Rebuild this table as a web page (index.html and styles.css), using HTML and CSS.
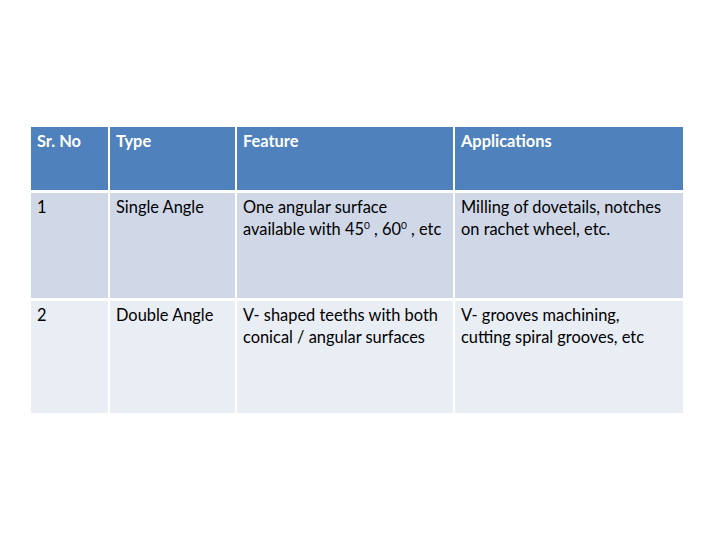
FILE: index.html
```html
<!DOCTYPE html>
<html>
<head>
<meta charset="utf-8">
<link rel="stylesheet" href="styles.css">
</head>
<body>
<div class="page">
  <table class="grid">
    <thead>
      <tr class="head">
        <th class="c1">Sr. No</th>
        <th class="c2">Type</th>
        <th class="c3">Feature</th>
        <th class="c4">Applications</th>
      </tr>
    </thead>
    <tbody>
      <tr class="odd">
        <td>1</td>
        <td>Single Angle</td>
        <td>One angular surface<br>available with 45<sup>0</sup> , 60<sup>0</sup> , etc</td>
        <td>Milling of dovetails, notches<br>on rachet wheel, etc.</td>
      </tr>
      <tr class="even">
        <td>2</td>
        <td>Double Angle</td>
        <td>V- shaped teeths with both<br>conical / angular surfaces</td>
        <td>V- grooves machining,<br>cutting spiral grooves, etc</td>
      </tr>
    </tbody>
  </table>
</div>
</body>
</html>
```

FILE: styles.css
```css
html, body {
  margin: 0;
  padding: 0;
  background: #ffffff;
}
.page {
  padding: 124px 0 0 29px;
}
.grid {
  table-layout: fixed;
  width: 656px;
  border-collapse: separate;
  border-spacing: 2px 3px;
  font-family: "Lato", "Open Sans", sans-serif;
  font-size: 16.4px;
  line-height: 22px;
  color: #000000;
}
.grid th, .grid td {
  box-sizing: border-box;
  vertical-align: top;
  text-align: left;
  padding: 3px 2px 0 6px;
  white-space: nowrap;
}
.grid th {
  font-weight: bold;
  color: #ffffff;
  background: #4f81bd;
}
.c1 { width: 77px; }
.c2 { width: 125px; }
.c3 { width: 216px; }
.c4 { width: 228px; }
.head { height: 63px; }
.odd { height: 105px; }
.odd td { background: #d0d8e8; }
.even { height: 112px; }
.even td { background: #e9edf4; }
sup {
  font-size: 0.62em;
  line-height: 0;
  vertical-align: 0.55em;
}
```
